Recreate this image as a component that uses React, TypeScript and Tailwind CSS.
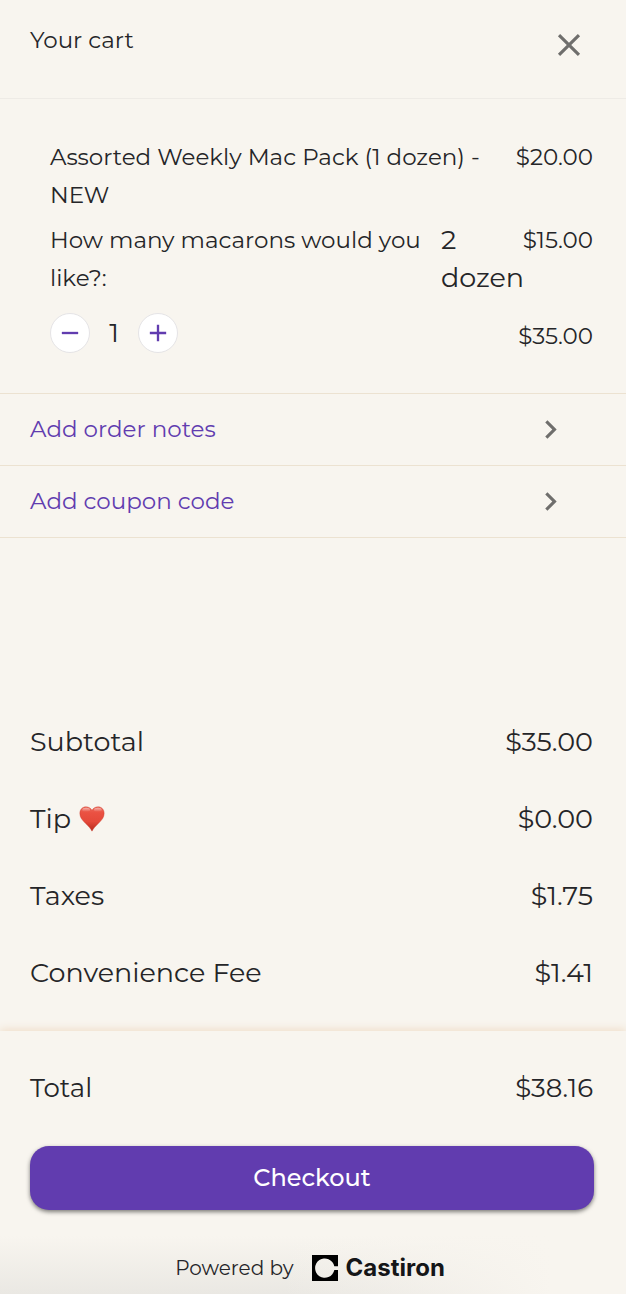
import React from "react";
import { MdAdd, MdChevronRight, MdClose, MdRemove } from "react-icons/md";

const cartItem = {
  name: "Assorted Weekly Mac Pack (1 dozen) - NEW",
  price: "$20.00",
  question: "How many macarons would you like?:",
  answer: "2 dozen",
  answerPrice: "$15.00",
  total: "$35.00",
};

const actions = ["Add order notes", "Add coupon code"];

const summary = [
  { label: "Subtotal", value: "$35.00" },
  { label: "Tip", value: "$0.00", icon: <HeartIcon /> },
  { label: "Taxes", value: "$1.75" },
  { label: "Convenience Fee", value: "$1.41" },
];

function HeartIcon() {
  return (
    <svg viewBox="0 0 24 24" className="size-[26px]" aria-hidden="true">
      <defs>
        <linearGradient id="heart-fill" x1="0" y1="0" x2="0" y2="1">
          <stop offset="0" stopColor="#ec6a5c" />
          <stop offset="0.25" stopColor="#ea5142" />
          <stop offset="0.6" stopColor="#e5493a" />
          <stop offset="1" stopColor="#b52a1c" />
        </linearGradient>
        <linearGradient id="heart-shine" x1="0" y1="0" x2="0" y2="1">
          <stop offset="0" stopColor="#fff" stopOpacity="0.5" />
          <stop offset="1" stopColor="#fff" stopOpacity="0" />
        </linearGradient>
      </defs>
      <path
        d="M12 23.2C10.8 20.8 8.6 18.6 6.2 16.2C3 13 .8 10.600 .8 6.700C.8 3.200 3.200 .8 6.500 .8C8.900 .8 10.900 2 12 4C13.100 2 15.100 .8 17.500 .8C20.800 .8 23.200 3.200 23.200 6.700C23.200 10.600 21 13 17.800 16.2C15.400 18.600 13.200 20.800 12 23.200Z"
        fill="url(#heart-fill)"
        stroke="#cf4534"
        strokeWidth="0.4"
      />
      <ellipse cx="6.600" cy="3.400" rx="3.600" ry="1.900" fill="url(#heart-shine)" />
      <ellipse cx="17.400" cy="3.400" rx="3.600" ry="1.900" fill="url(#heart-shine)" />
    </svg>
  );
}

function CastironMark() {
  return (
    <svg viewBox="0 0 26 26" className="size-[26px]" aria-hidden="true">
      <path
        fill="#000"
        fillRule="evenodd"
        d="M0 0H26V11.200H22.300A9.700 9.700 0 1 0 22.300 15H26V26H0Z"
      />
    </svg>
  );
}

const Header = () => (
  <header className="flex items-start justify-between border-b border-[#eeebe6] pt-[21px] pr-[38px] pb-[34px] pl-[30px]">
    <h1 className="text-[23px] leading-[38px]">Your cart</h1>
    <button type="button" aria-label="Close cart" className="mt-[5px] text-[#6f6e6c]">
      <MdClose size={38} />
    </button>
  </header>
);

const QuantityPicker = () => {
  const [quantity, setQuantity] = React.useState(1);
  const buttonClass =
    "flex size-10 items-center justify-center rounded-full border border-[#e5e4e6] bg-white text-[#613caf]";

  return (
    <div className="flex items-center">
      <button
        type="button"
        aria-label="Decrease quantity"
        className={buttonClass}
        onClick={() => setQuantity(Math.max(1, quantity - 1))}
      >
        <MdRemove size={28} />
      </button>
      <span className="w-12 text-center text-[27px] leading-10">{quantity}</span>
      <button
        type="button"
        aria-label="Increase quantity"
        className={buttonClass}
        onClick={() => setQuantity(quantity + 1)}
      >
        <MdAdd size={28} />
      </button>
    </div>
  );
};

const CartItem = () => (
  <section className="pt-[39px] pr-[33px] pb-[38px] pl-[50px] text-[23px] leading-[38px]">
    <div className="flex justify-between">
      <p className="max-w-[440px]">{cartItem.name}</p>
      <p>{cartItem.price}</p>
    </div>
    <div className="mt-[7px] flex">
      <p className="flex-1">{cartItem.question}</p>
      <p className="w-[82px] text-[27px]">{cartItem.answer}</p>
      <p className="flex w-[70px] justify-end">{cartItem.answerPrice}</p>
    </div>
    <div className="mt-4 flex items-start justify-between">
      <QuantityPicker />
      <p className="pt-1">{cartItem.total}</p>
    </div>
  </section>
);

export default function App() {
  return (
    <main className="flex min-h-screen flex-col bg-[#f8f5ef] font-['Montserrat','Inter',sans-serif] text-[#252528]">
      <Header />
      <CartItem />

      <nav className="border-b border-[#ece2d1]">
        {actions.map((label) => (
          <button
            key={label}
            type="button"
            className="flex w-full items-center justify-between border-t border-[#ece2d1] py-[17px] pr-[57px] pl-[30px] text-[23px] leading-[37px] text-[#613caf]"
          >
            {label}
            <MdChevronRight size={37} className="text-[#6f6e6c]" />
          </button>
        ))}
      </nav>

      <dl className="mt-auto flex flex-col gap-[39px] pt-10 pr-[33px] pb-[39px] pl-[30px] text-[27px] leading-[38px]">
        {summary.map(({ label, value, icon }) => (
          <div key={label} className="flex justify-between">
            <dt className="flex items-center gap-2">
              {label}
              {icon}
            </dt>
            <dd>{value}</dd>
          </div>
        ))}
      </dl>

      <footer className="bg-[#f8f5ef] shadow-[0_-2px_8px_#f0dfcb]">
        <div className="flex justify-between pt-[38px] pr-[33px] pl-[30px] text-[26px] leading-[38px]">
          <span>Total</span>
          <span>$38.16</span>
        </div>
        <div className="pt-[39px] pr-8 pl-[30px]">
          <button
            type="button"
            className="h-16 w-full rounded-[19px] bg-[#613caf] text-2xl font-medium text-white shadow-[0_2px_4px_rgba(0,0,0,0.5)]"
          >
            Checkout
          </button>
        </div>
        <div className="mt-[26px] flex items-center justify-center bg-[linear-gradient(to_right,transparent_45%,#f8f5ef_88%),linear-gradient(to_bottom,#f8f5ef,#eae8e3)] pt-4 pr-[6px] pb-[10px] leading-8">
          <span className="text-[20px]">Powered by</span>
          <a
            href="#castiron"
            className="ml-[18px] flex items-center gap-2 font-['Inter',sans-serif] text-2xl font-bold text-[#151618]"
          >
            <CastironMark />
            Castiron
          </a>
        </div>
      </footer>
    </main>
  );
}
